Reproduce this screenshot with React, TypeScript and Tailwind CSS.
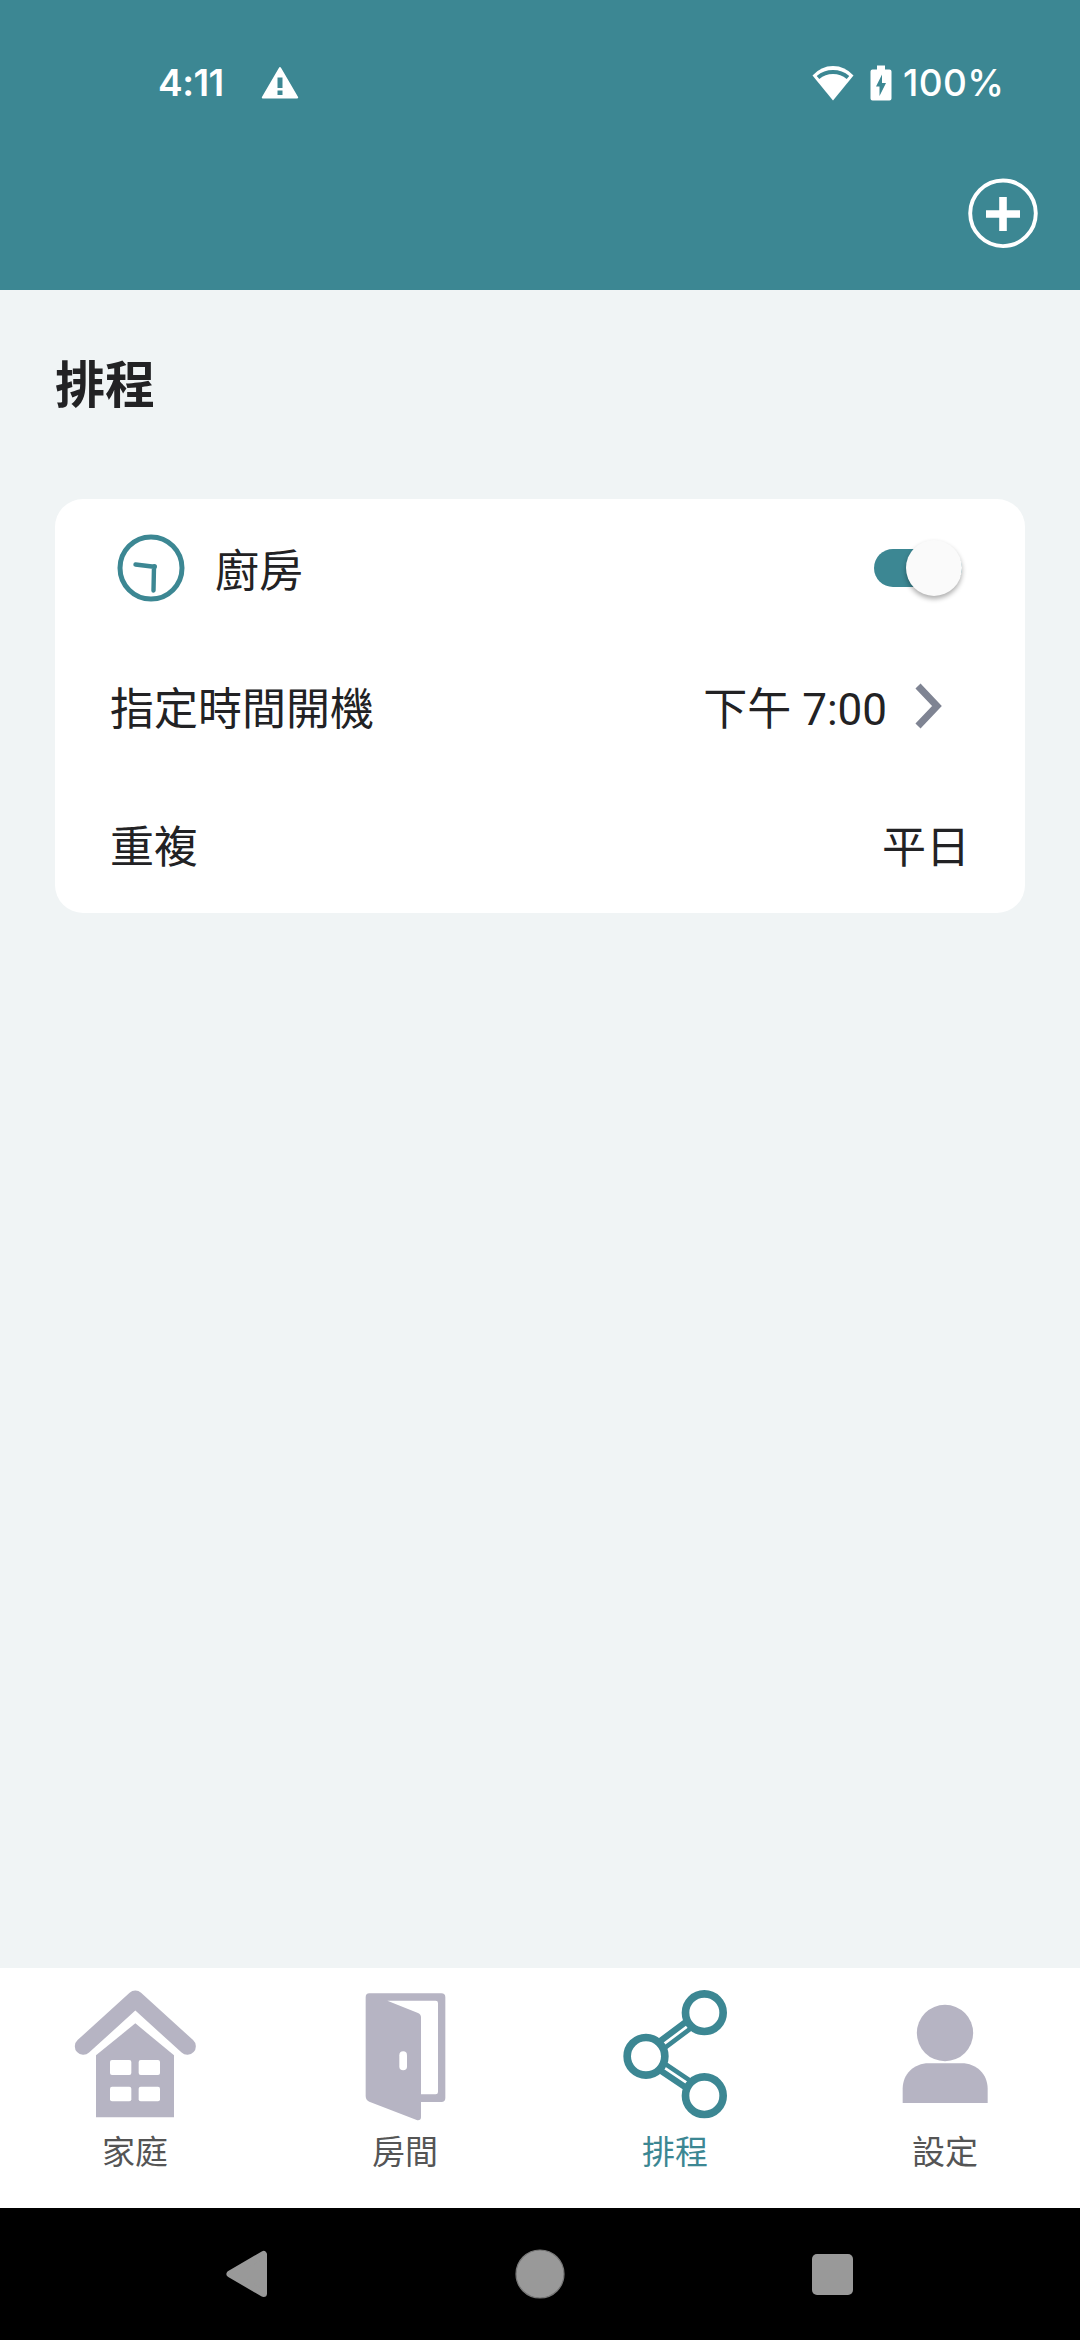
import type { ReactNode } from "react";

function WarningIcon() {
  return (
    <svg className="h-[34px] w-[38px]" viewBox="0 0 38 34">
      <path d="M19 2 L36.2 31.5 H1.8 Z" fill="#fff" stroke="#fff" strokeWidth="2" strokeLinejoin="round" />
      <path d="M16.5 11.500h5v10.500h-5zM16.500 24.500h5v4.500h-5z" fill="#3c8793" />
    </svg>
  );
}

function WifiIcon() {
  return (
    <svg className="h-9 w-[42px]" viewBox="0 0 42 36">
      <path d="M0.5 10.5 Q9 1 21 1 Q33 1 41.5 10.5 L21 35.5 Z" fill="#fff" />
      <path d="M6 12.5 Q12.5 7 21 7 Q29.500 7 36 12.500" fill="none" stroke="#3c8793" strokeWidth="4" />
    </svg>
  );
}

function BatteryIcon() {
  return (
    <svg className="h-9 w-[22px]" viewBox="0 0 22 36">
      <path d="M7 0.500h8v4h4.500q2 0 2 2v27q0 2-2 2h-17q-2 0-2-2v-27q0-2 2-2H7z" fill="#fff" />
      <path d="M12 9.500v8.500h4L9.500 31v-9.500H6z" fill="#3c8793" />
    </svg>
  );
}

function PlusCircleIcon() {
  return (
    <svg className="size-[72px]" viewBox="0 0 72 72">
      <circle cx="36" cy="36.300" r="32.800" fill="none" stroke="#fff" strokeWidth="3.900" />
      <path d="M36 20v34M19 37h34" stroke="#fff" strokeWidth="7.600" />
    </svg>
  );
}

function ClockIcon() {
  return (
    <svg className="size-[68px]" viewBox="0 0 68 68" fill="none" stroke="#3c8793">
      <circle cx="34" cy="34" r="31" strokeWidth="5" />
      <path d="M18.500 30.500 L37 32.800 L36.500 56.500" strokeWidth="4.400" strokeLinecap="round" strokeLinejoin="round" />
      <circle cx="37.500" cy="32.500" r="1.500" strokeWidth="2" />
    </svg>
  );
}

function HomeIcon() {
  return (
    <svg className="size-40" viewBox="-15 54 480 480">
      <path d="M70 289 L226 147 L382 289" fill="none" stroke="#b6b4c3" strokeWidth="51" strokeLinecap="round" strokeLinejoin="round" />
      <path d="M226 220 L342 316 V502 H108 V316 Z" fill="#b6b4c3" />
      <g fill="#fff">
        <rect x="150" y="330" width="64" height="45" rx="6" />
        <rect x="236" y="330" width="64" height="45" rx="6" />
        <rect x="150" y="410" width="64" height="44" rx="6" />
        <rect x="236" y="410" width="64" height="44" rx="6" />
      </g>
    </svg>
  );
}

function DoorIcon() {
  return (
    <svg className="size-40" viewBox="-45 54 480 480">
      <path
        fillRule="evenodd"
        fill="#b6b4c3"
        d="M88 130H304Q316 130 316 142V444Q316 456 304 456H243V502Q243 512 232 511L88 455Q77 450 77 438V142Q77 130 88 130Z M142 152L234 189Q243 193 243 202V433H287Q294 433 294 426V159Q294 152 287 152Z"
      />
      <rect x="178" y="304" width="23" height="57" rx="11.500" fill="#fff" />
    </svg>
  );
}

function ShareIcon() {
  return (
    <svg className="size-40" viewBox="-15 54 480 480">
      <path d="M138 319 L313 188 M138 319 L313 437" stroke="#3c8793" strokeWidth="41" />
      <path d="M138 322 L313 191 M138 316 L313 434" stroke="#fff" strokeWidth="8" />
      <g fill="#fff" stroke="#3c8793" strokeWidth="23">
        <circle cx="313" cy="188" r="56.500" />
        <circle cx="138" cy="319" r="56.500" />
        <circle cx="313" cy="437" r="56.500" />
      </g>
    </svg>
  );
}

function PersonIcon() {
  return (
    <svg className="size-40" viewBox="-45 54 480 480" fill="#b6b4c3">
      <circle cx="195" cy="249" r="84.500" />
      <path d="M68 459V417C68 372 102 340 146 340H245C289 340 323 372 323 417V459Z" />
    </svg>
  );
}

function Row({ children }: { children: ReactNode }) {
  return <div className="flex h-[138px] items-center justify-between pr-[55px] pl-[55px]">{children}</div>;
}

function Switch() {
  return (
    <button role="switch" aria-checked="true" className="relative mr-[8px] h-[38px] w-[88px] rounded-full bg-[#3c8793]">
      <span className="absolute -top-[9px] right-0 size-14 rounded-full bg-[#fafafa] shadow-[0_3px_5px_rgba(0,0,0,0.32)]" />
    </button>
  );
}

function Tab({ icon, label, active = false }: { icon: ReactNode; label: string; active?: boolean }) {
  return (
    <button className="flex flex-1 flex-col items-center">
      {icon}
      <span className={active ? "mt-2 text-[33px] leading-none text-[#3c8793]" : "mt-2 text-[33px] leading-none text-[#555]"}>
        {label}
      </span>
    </button>
  );
}

export default function App() {
  return (
    <div
      lang="zh-TW"
      className="flex h-[2340px] w-[1080px] flex-col overflow-hidden bg-[#f0f4f5] font-[Roboto,'Noto_Sans_CJK_TC',sans-serif] text-[#222224]"
    >
      <header className="h-[290px] shrink-0 bg-[#3c8793] text-white">
        <div className="flex h-[165px] items-center justify-between pr-[78px] pl-[158px] font-[Inter,sans-serif] text-[37px] leading-none">
          <div className="flex items-center">
            <span className="w-[103px] font-semibold tracking-[-0.5px]">4:11</span>
            <WarningIcon />
          </div>
          <div className="flex items-center">
            <WifiIcon />
            <span className="ml-4 flex">
              <BatteryIcon />
            </span>
            <span className="ml-[11px] w-[99px] font-medium tracking-[0.4px]">100%</span>
          </div>
        </div>
        <div className="flex justify-end pt-3 pr-[41px]">
          <PlusCircleIcon />
        </div>
      </header>

      <main className="flex-1 px-[55px] pt-[71px]">
        <h1 className="mb-[88px] text-[50px] leading-none font-bold">排程</h1>
        <section className="rounded-[28px] bg-white text-[44px] leading-none">
          <Row>
            <div className="flex items-center pl-[7px]">
              <ClockIcon />
              <span className="ml-[30px] pt-2">廚房</span>
            </div>
            <Switch />
          </Row>
          <Row>
            <span className="pt-2">指定時間開機</span>
            <div className="flex items-center pr-[27px]">
              <span className="pt-2">下午 7:00</span>
              <svg className="ml-[26px] h-[48px] w-[30px]" viewBox="0 0 30 48" fill="none" stroke="#7f8493" strokeWidth="7">
                <path d="M5 4 L24 24 L5 44" />
              </svg>
            </div>
          </Row>
          <Row>
            <span className="pt-2">重複</span>
            <span className="pt-2">平日</span>
          </Row>
        </section>
      </main>

      <nav className="flex h-60 shrink-0 bg-white">
        <Tab icon={<HomeIcon />} label="家庭" />
        <Tab icon={<DoorIcon />} label="房間" />
        <Tab icon={<ShareIcon />} label="排程" active />
        <Tab icon={<PersonIcon />} label="設定" />
      </nav>

      <footer className="flex h-[132px] shrink-0 items-center justify-between bg-black pr-[227px] pl-[225px]">
        <svg className="h-12 w-[43px]" viewBox="0 0 43 48">
          <path d="M38.500 4.500V43.500L5 24Z" fill="#999" stroke="#999" strokeWidth="7" strokeLinejoin="round" />
        </svg>
        <svg className="size-[50px]" viewBox="0 0 50 50">
          <circle cx="25" cy="25" r="24" fill="#999" stroke="#777" strokeWidth="1.200" />
        </svg>
        <span className="size-[41px] rounded-[5px] bg-[#999]" />
      </footer>
    </div>
  );
}
